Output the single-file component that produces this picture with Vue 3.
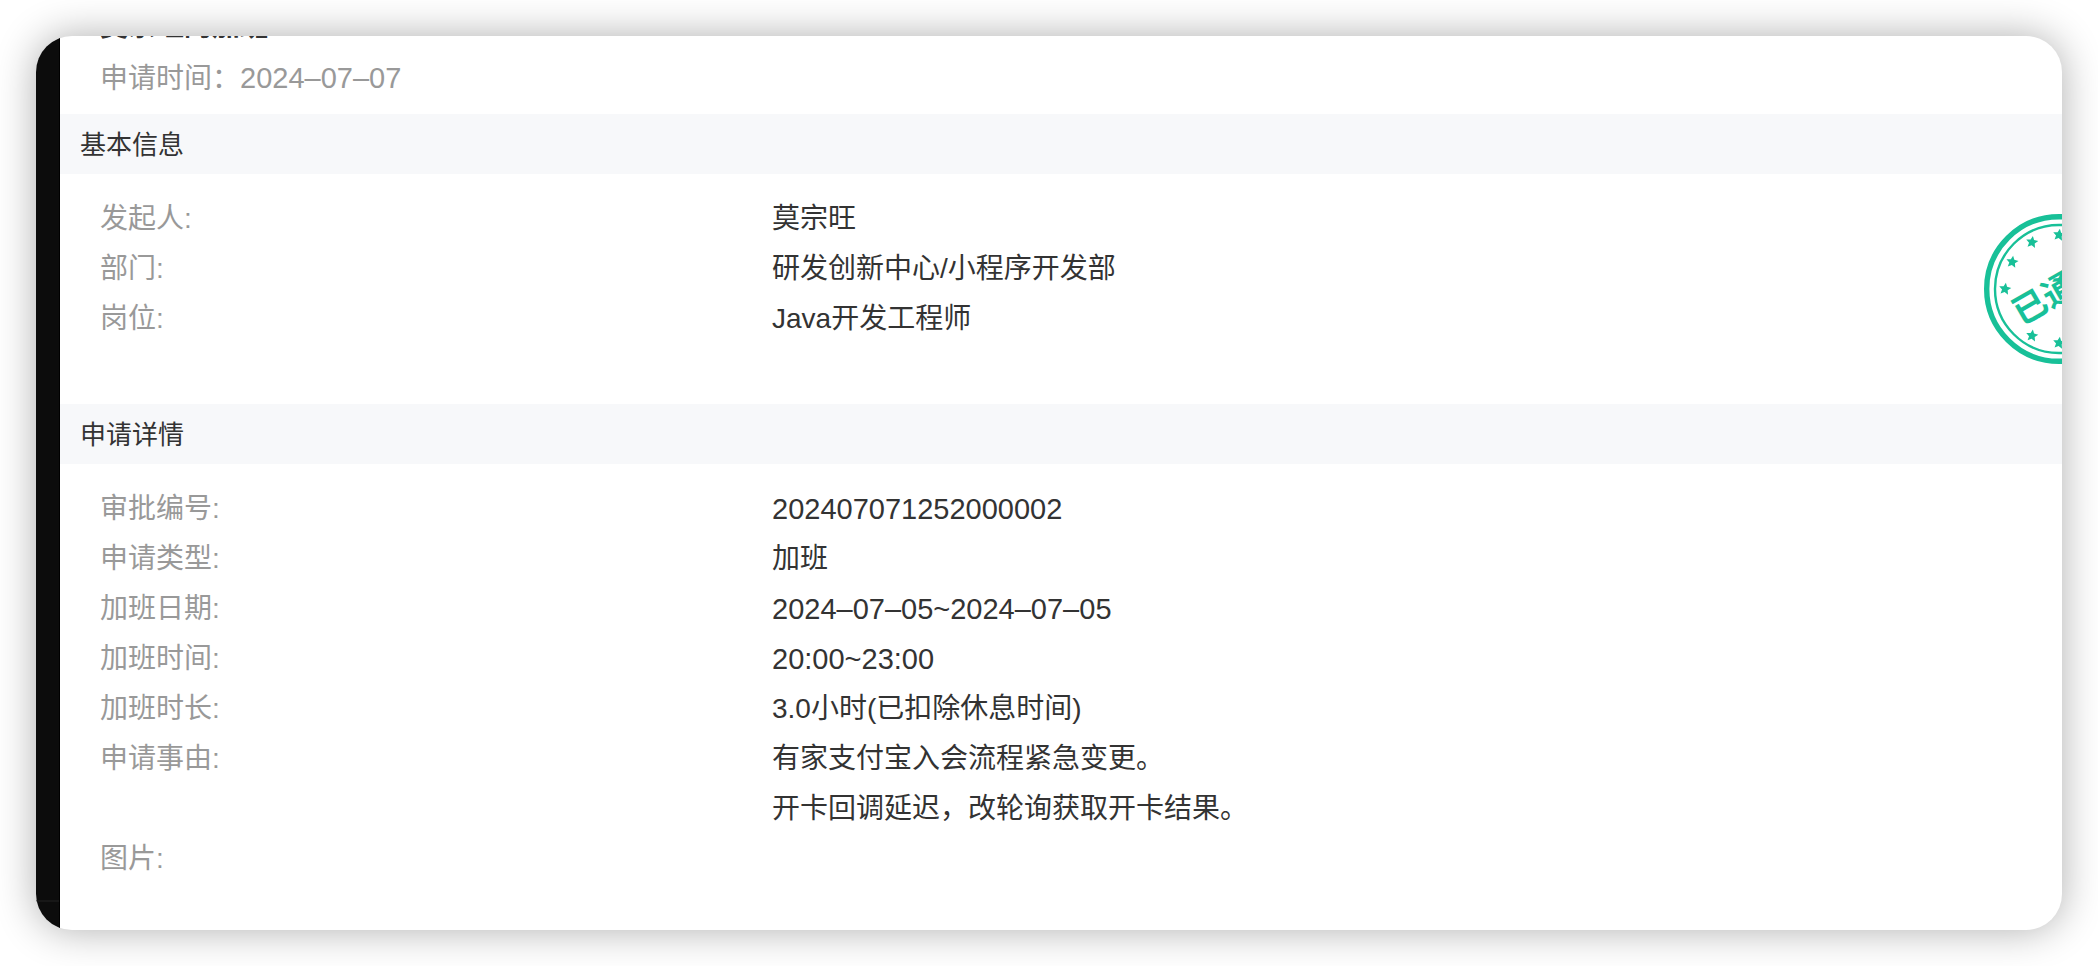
<script setup>
const basic = [
  { label: '发起人:', lines: ['莫宗旺'] },
  { label: '部门:', lines: ['研发创新中心/小程序开发部'] },
  { label: '岗位:', lines: ['Java开发工程师'] },
]

const detail = [
  { label: '审批编号:', lines: ['202407071252000002'], kind: 'num' },
  { label: '申请类型:', lines: ['加班'] },
  { label: '加班日期:', lines: ['2024–07–05~2024–07–05'], kind: 'num' },
  { label: '加班时间:', lines: ['20:00~23:00'], kind: 'num' },
  { label: '加班时长:', lines: ['3.0小时(已扣除休息时间)'] },
  { label: '申请事由:', lines: ['有家支付宝入会流程紧急变更。', '开卡回调延迟，改轮询获取开卡结果。'] },
  { label: '图片:', lines: [] },
]

// Stars sit every 30 degrees on the ring, leaving room where the text crosses it.
const stars = [0, 60, 90, 120, 180, 210, 240, 270, 300].map((deg) => {
  const a = (deg * Math.PI) / 180
  return { x: 75 + 54 * Math.cos(a), y: 75 + 54 * Math.sin(a) }
})

const starPoints = Array.from({ length: 10 }, (_, i) => {
  const r = i % 2 ? 3 : 6.4
  const a = ((i * 36 - 82) * Math.PI) / 180
  return `${(r * Math.cos(a)).toFixed(2)},${(r * Math.sin(a)).toFixed(2)}`
}).join(' ')
</script>

<template>
  <div class="stage">
    <div class="window">
      <aside class="rail"><span class="rail-line"></span></aside>
      <main class="page">
        <header class="head">
          <h1 class="title">莫宗旺的加班</h1>
          <p class="time">申请时间：<span class="num">2024–07–07</span></p>
        </header>

        <section>
          <h2 class="bar">基本信息</h2>
          <dl class="rows rows-basic">
            <div v-for="r in basic" :key="r.label" class="row">
              <dt>{{ r.label }}</dt>
              <dd><p v-for="l in r.lines" :key="l">{{ l }}</p></dd>
            </div>
            <svg class="stamp" viewBox="0 0 150 150" role="img" aria-label="已通过">
              <circle cx="75" cy="75" r="72.3" stroke-width="5.4" />
              <circle cx="75" cy="75" r="64" stroke-width="2.4" />
              <polygon
                v-for="(s, i) in stars"
                :key="i"
                :points="starPoints"
                :transform="`translate(${s.x} ${s.y})`"
              />
              <text x="75" y="88" text-anchor="middle" transform="rotate(-30 75 75)">已通过</text>
            </svg>
          </dl>
        </section>

        <section>
          <h2 class="bar">申请详情</h2>
          <dl class="rows">
            <div v-for="r in detail" :key="r.label" class="row">
              <dt>{{ r.label }}</dt>
              <dd :class="r.kind"><p v-for="l in r.lines" :key="l">{{ l }}</p></dd>
            </div>
          </dl>
        </section>
      </main>
    </div>
  </div>
</template>

<style>
body {
  margin: 0;
  background: #fff;
}
</style>

<style scoped>
.stage {
  box-sizing: border-box;
  min-height: 100vh;
  padding: 36px;
  display: flex;
  overflow: hidden;
  font-family: "Liberation Sans", "Noto Sans CJK SC", sans-serif;
  font-size: 28px;
  line-height: 50px;
  color: #333;
}
.window {
  flex: 1;
  display: flex;
  border-radius: 36px;
  overflow: hidden;
  background: #fff;
  box-shadow: 0 0 40px rgba(0, 0, 0, 0.32);
}
.rail {
  box-sizing: border-box;
  width: 24px;
  background: #0c0c0c;
  border-right: 1px solid #000;
  display: flex;
  flex-direction: column;
  justify-content: flex-end;
  padding-bottom: 28px;
}
.rail-line {
  height: 2px;
  background: #171717;
}
.page {
  flex: 1;
  min-width: 0;
}
h1, h2, p, dl, dd {
  margin: 0;
}
.head {
  box-sizing: border-box;
  height: 78px;
  padding: 0 40px 10px;
  display: flex;
  flex-direction: column;
  justify-content: flex-end;
  overflow: hidden;
}
.title {
  flex: none;
  font-size: 28px;
  line-height: 52px;
  font-weight: 700;
}
.time {
  flex: none;
  color: #999;
}
.num {
  font-size: 29px;
}
.bar {
  height: 60px;
  padding: 0 20px;
  background: #f7f8fa;
  font-size: 26px;
  line-height: 62px;
  font-weight: 400;
}
.rows {
  position: relative;
  padding: 20px 42px 0 40px;
}
.rows-basic {
  padding-bottom: 60px;
}
.row {
  display: flex;
}
dt {
  flex: none;
  width: 35%;
  color: #999;
}
dd {
  flex: 1;
}
.stamp {
  position: absolute;
  top: 40px;
  right: -72px;
  width: 150px;
  height: 150px;
}
.stamp circle {
  fill: none;
  stroke: #18c098;
}
.stamp polygon,
.stamp text {
  fill: #18c098;
}
.stamp text {
  font-size: 34px;
  font-weight: 700;
}
</style>
